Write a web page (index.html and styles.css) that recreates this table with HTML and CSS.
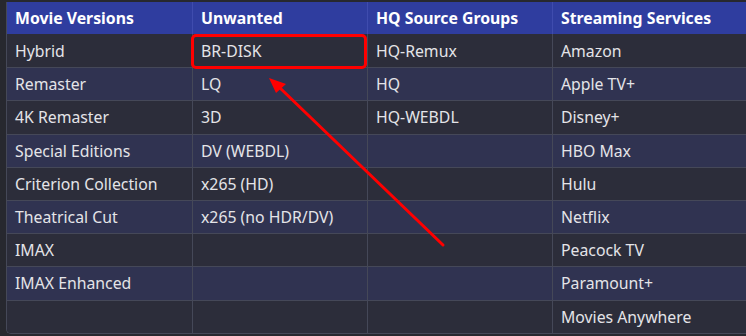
FILE: index.html
```html
<!DOCTYPE html>
<html>
<head>
<meta charset="utf-8">
<link rel="stylesheet" href="styles.css">
</head>
<body>
<div class="frame">
  <table class="grid">
    <colgroup>
      <col class="c1"><col class="c2"><col class="c3"><col class="c4">
    </colgroup>
    <thead>
      <tr><th>Movie Versions</th><th>Unwanted</th><th>HQ Source Groups</th><th>Streaming Services</th></tr>
    </thead>
    <tbody>
      <tr><td>Hybrid</td><td class="mark">BR-DISK</td><td>HQ-Remux</td><td>Amazon</td></tr>
      <tr><td>Remaster</td><td>LQ</td><td>HQ</td><td>Apple TV+</td></tr>
      <tr><td>4K Remaster</td><td>3D</td><td>HQ-WEBDL</td><td>Disney+</td></tr>
      <tr><td>Special Editions</td><td>DV (WEBDL)</td><td></td><td>HBO Max</td></tr>
      <tr><td>Criterion Collection</td><td>x265 (HD)</td><td></td><td>Hulu</td></tr>
      <tr><td>Theatrical Cut</td><td>x265 (no HDR/DV)</td><td></td><td>Netflix</td></tr>
      <tr><td>IMAX</td><td></td><td></td><td>Peacock TV</td></tr>
      <tr><td>IMAX Enhanced</td><td></td><td></td><td>Paramount+</td></tr>
      <tr><td></td><td></td><td></td><td>Movies Anywhere</td></tr>
    </tbody>
  </table>
  <div class="highlight"></div>
  <svg class="arrow" width="746" height="336" viewBox="0 0 746 336">
    <line x1="443" y1="245" x2="280" y2="88" stroke="#ff0000" stroke-width="3" stroke-linecap="round"/>
    <polygon points="269,78 286,84 276,93" fill="#ff0000"/>
  </svg>
</div>
</body>
</html>
```
FILE: styles.css
```css
html, body {
  margin: 0;
  padding: 0;
  background: #27282f;
  width: 746px;
  height: 336px;
  overflow: hidden;
}
.frame {
  position: relative;
  width: 746px;
  height: 336px;
  padding: 2px 0 0 6px;
  box-sizing: border-box;
}
.grid {
  border-collapse: separate;
  border-spacing: 0;
  table-layout: fixed;
  width: 760px;
  font-family: "Noto Sans", "Open Sans", sans-serif;
  font-size: 15.8px;
  color: #e4e4e8;
  border-left: 1px solid #454858;
  border-bottom: 1px solid #454858;
  border-bottom-left-radius: 5px;
  overflow: hidden;
}
.c1 { width: 186px; }
.c2 { width: 175px; }
.c3 { width: 185px; }
.c4 { width: 214px; }
th, td {
  height: 33.2px;
  padding: 0 8px;
  box-sizing: border-box;
  text-align: left;
  white-space: nowrap;
  border-right: 1px solid #454858;
}
th {
  background: #2f3d9f;
  color: #ffffff;
  font-weight: 700;
  height: 32px;
  border-right-color: #3f4cae;
}
td {
  border-top: 1px solid #454858;
}
tbody tr:nth-child(odd) td { background: #2c2d3a; }
tbody tr:nth-child(even) td { background: #303351; }
tbody tr:first-child td { border-top: none; }
.highlight {
  position: absolute;
  left: 191px;
  top: 34px;
  width: 176px;
  height: 35px;
  box-sizing: border-box;
  border: 3px solid #ff0000;
  border-radius: 5px;
}
.arrow {
  position: absolute;
  left: 0;
  top: 0;
}
```
